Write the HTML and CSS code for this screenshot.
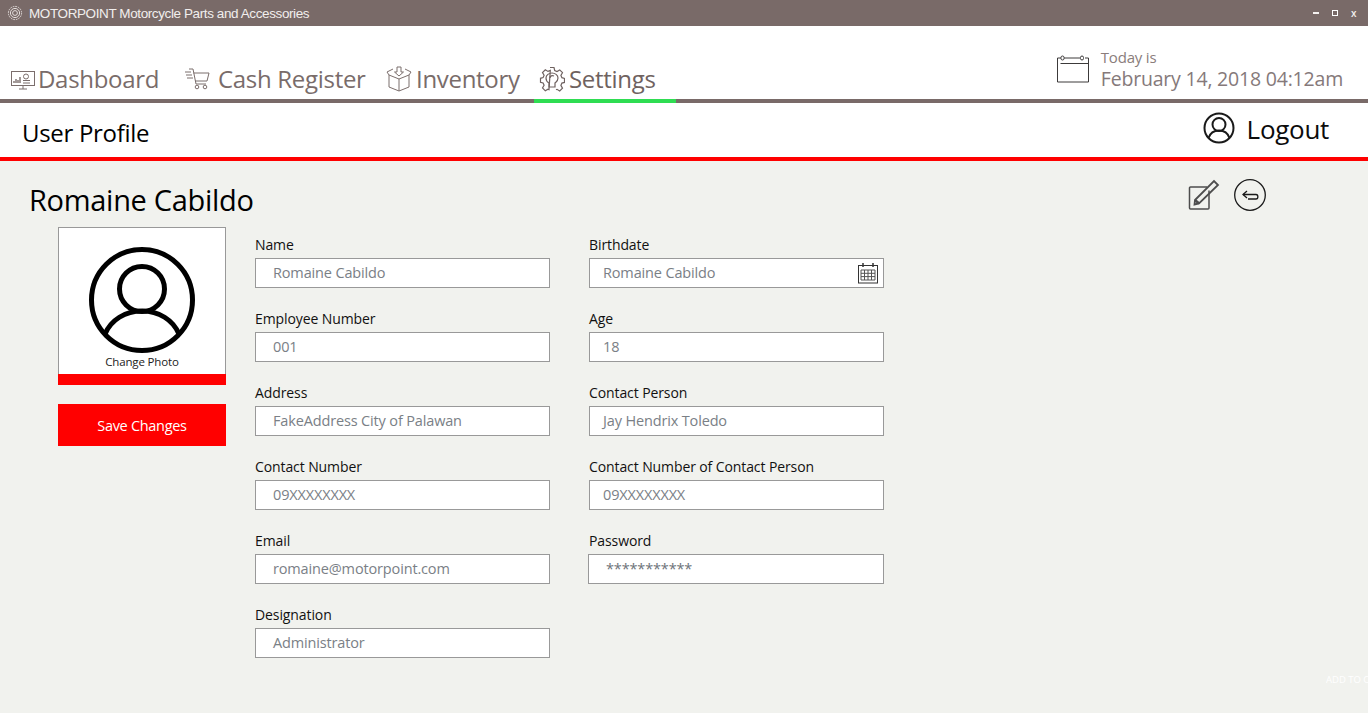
FILE: index.html
```html
<!DOCTYPE html>
<html lang="en">
<head>
<meta charset="utf-8">
<title>MOTORPOINT</title>
<link rel="stylesheet" href="styles.css">
</head>
<body>
<div class="app">
  <header class="titlebar">
    <svg class="title-logo" viewBox="0 0 16 16" width="16" height="16" fill="none" stroke="#e4dedc" stroke-width="1"><circle cx="8" cy="8" r="6.6" stroke-dasharray="1.6 1"/><circle cx="8" cy="8" r="4.6"/><circle cx="8" cy="8" r="2.4"/></svg>
    <span class="title-text">MOTORPOINT Motorcycle Parts and Accessories</span>
    <div class="win-controls">
      <span class="win-min"></span>
      <span class="win-max"></span>
      <span class="win-close">x</span>
    </div>
  </header>

  <nav class="navbar">
    <div class="tabs">
      <a class="tab tab-dash">
        <svg viewBox="0 0 26 22" width="26" height="22" fill="none" stroke="#7b6e6c" stroke-width="1"><rect x="1.5" y="3.5" width="23" height="14"/><path d="M9 21h8M13 18v3"/><path d="M4 15v-2M6 15v-4M8 15v-3M10 15V9" stroke-width="1.4"/><circle cx="16" cy="8.5" r="2.5"/><path d="M13 12.5h7M13 15h7"/></svg>
        <span>Dashboard</span>
      </a>
      <a class="tab tab-cash">
        <svg viewBox="0 0 26 24" width="26" height="24" fill="none" stroke="#7b6e6c" stroke-width="1"><path d="M5 2h4l3 15h10"/><path d="M9.5 6H25l-2 8H11"/><path d="M1 5h6M2 8h6M3 11h6"/><circle cx="13" cy="20" r="1.8"/><circle cx="21" cy="20" r="1.8"/></svg>
        <span>Cash Register</span>
      </a>
      <a class="tab tab-inv">
        <svg viewBox="0 0 26 26" width="26" height="26" fill="none" stroke="#7b6e6c" stroke-width="1"><path d="M3 9v12l10 4 10-4V9"/><path d="M3 9l10 4 10-4M13 13v12"/><path d="M3 9L1 6l6-3M23 9l2-3-6-3"/><path d="M11 1h4v5h2.5L13 10 8.500 6H11z"/></svg>
        <span>Inventory</span>
      </a>
      <a class="tab tab-set">
        <svg viewBox="0 0 26 26" width="26" height="26" fill="none" stroke="#6f6260" stroke-width="1.2"><path d="M11 1.500h4l.7 3 2.300 1 2.700-1.600 2.800 2.800-1.600 2.700 1 2.300 2.600.7v4l-2.600.7-1 2.300 1.600 2.700-2.800 2.800-2.700-1.600-1 .4M10 23.600l-1-.4-2.700 1.600-2.800-2.800 1.600-2.700-1-2.300-2.600-.7v-4l2.600-.7 1-2.300-1.600-2.700 2.800-2.800 2.700 1.600 2.300-1z"/><path d="M10 20v-3c-2-1-3-3-3-5 0-3 3-5 6-5s6 2 6 5-2 4-3 5v4h-6z"/><path d="M11 12c0-2 2-3 4-2"/></svg>
        <span>Settings</span>
      </a>
    </div>
    <div class="today">
      <svg class="today-icon" viewBox="0 0 34 28" width="34" height="28" fill="none" stroke="#3c3a3a" stroke-width="1"><path d="M5 3H1.500v24h31V3H29"/><path d="M4.500 8.500h28"/><path d="M8 3h16"/><rect x="5" y="1" width="3" height="4" rx="1.500"/><rect x="24.500" y="1" width="3" height="4" rx="1.500"/></svg>
      <div class="today-text">
        <div class="today-label">Today is</div>
        <div class="today-date">February 14, 2018 04:12am</div>
      </div>
    </div>
  </nav>

  <div class="subheader">
    <h1 class="page-title">User Profile</h1>
    <a class="logout">
      <svg viewBox="0 0 32 32" width="32" height="32" fill="none" stroke="#1a1a1a" stroke-width="2"><circle cx="16" cy="16" r="14.500"/><circle cx="16" cy="12.500" r="6.500"/><path d="M5.500 26c1.500-4.500 5.500-7.500 10.500-7.500S25 21.500 26.500 26"/></svg>
      <span>Logout</span>
    </a>
  </div>

  <main class="content">
    <div class="content-head">
      <h2 class="person">Romaine Cabildo</h2>
      <div class="actions">
        <svg viewBox="0 0 32 32" width="32" height="32" fill="none" stroke="#4d4d4d" stroke-width="1.500"><path d="M21 11.500V29a1 1 0 0 1-1 1H2.500a1 1 0 0 1-1-1V9a1 1 0 0 1 1-1H19"/><path d="M7 21l-.5 4.500 4.500-1L30 6l-4-4z" stroke-width="1.800"/><path d="M7 21l4 3.500" stroke-width="2.500"/></svg>
        <svg viewBox="0 0 32 32" width="32" height="32" fill="none" stroke="#1a1a1a" stroke-width="1.300"><circle cx="16" cy="16" r="15.300"/><path d="M13 12l-4 3.500 4 3.500"/><path d="M9 15.500h13c2.500 0 2.500 4.500 0 4.500h-8"/></svg>
      </div>
    </div>

    <div class="profile">
      <aside class="side">
        <div class="photo">
          <div class="photo-inner">
            <svg viewBox="0 0 106 106" width="106" height="106" fill="none" stroke="#000" stroke-width="5"><circle cx="53" cy="53" r="50.500"/><circle cx="53" cy="42" r="22.500"/><path d="M16 87c6-14 20-23 37-23s31 9 37 23"/></svg>
            <span class="photo-label">Change Photo</span>
          </div>
          <div class="photo-bar"></div>
        </div>
        <button class="save">Save Changes</button>
      </aside>

      <form class="form">
        <div class="field"><label>Name</label><div class="input">Romaine Cabildo</div></div>
        <div class="field"><label>Birthdate</label>
          <div class="input input-date">Romaine Cabildo
            <svg class="date-icon" viewBox="0 0 20 22" width="20" height="22" fill="none" stroke="#333" stroke-width="1"><rect x="0.500" y="3.500" width="19" height="17.500"/><path d="M5 1v4M15 1v4" stroke-width="1.500"/><path d="M3 8h14v10H3zM3 11.300h14M3 14.600h14M6.500 8v10M10 8v10M13.500 8v10" stroke="#555"/></svg>
          </div>
        </div>
        <div class="field"><label>Employee Number</label><div class="input">001</div></div>
        <div class="field"><label>Age</label><div class="input input-short">18</div></div>
        <div class="field"><label>Address</label><div class="input">FakeAddress City of Palawan</div></div>
        <div class="field"><label>Contact Person</label><div class="input input-short">Jay Hendrix Toledo</div></div>
        <div class="field"><label>Contact Number</label><div class="input">09XXXXXXXX</div></div>
        <div class="field"><label>Contact Number of Contact Person</label><div class="input input-short">09XXXXXXXX</div></div>
        <div class="field"><label>Email</label><div class="input">romaine@motorpoint.com</div></div>
        <div class="field"><label>Password</label><div class="input input-pass">***********</div></div>
        <div class="field"><label>Designation</label><div class="input">Administrator</div></div>
      </form>
    </div>
    <span class="ghost">ADD TO CART</span>
  </main>
  <div class="footer-gap"></div>
</div>
</body>
</html>
```
FILE: styles.css
```css
* { box-sizing: border-box; }
html, body { margin: 0; padding: 0; height: 100%; background: #fff; overflow: hidden; }
body { font-family: "Open Sans", "Noto Sans", sans-serif; color: #000; }
.app { display: flex; flex-direction: column; width: 1368px; height: 720px; }

.titlebar { height: 26px; background: #796a68; display: flex; align-items: center; padding: 0 0 0 7px; color: #f1eeed; flex: none; }
.title-logo { margin-right: 6px; }
.title-text { font-family: "Liberation Sans", sans-serif; font-size: 13.500px; letter-spacing: -0.400px; }
.win-controls { margin-left: auto; display: flex; align-items: center; gap: 13px; padding-right: 11px; }
.win-min { width: 6px; height: 2px; background: #f4f1f0; }
.win-max { width: 6px; height: 6px; border: 1.500px solid #fff; }
.win-close { font-size: 10px; font-weight: 600; line-height: 10px; width: 6px; }

.navbar { height: 77px; flex: none; border-bottom: 4px solid #796a68; display: flex; justify-content: space-between; position: relative; }
.tabs { display: flex; align-items: flex-end; padding-left: 10px; }
.tab { display: flex; align-items: center; color: #796c6a; font-size: 24px; letter-spacing: -0.300px; height: 73px; padding-top: 29px; margin-bottom: -4px; border-bottom: 4px solid transparent; line-height: 40px; }
.tab svg { flex: none; }
.tab-dash { gap: 2px; width: 174px; }
.tab-cash { gap: 8px; width: 204px; }
.tab-inv { gap: 4px; width: 143px; margin-left: -3px; padding-left: 1px; }
.tab-set { gap: 4px; width: 142px; padding-left: 5px; margin-left: 6px; border-bottom-color: #2fdd52; color: #6f6260; }

.today { display: flex; align-items: flex-start; padding: 20px 25px 0 0; }
.today-icon { margin: 9px 11px 0 0; }
.today-label { font-size: 15px; line-height: 22px; color: #8a7d7b; letter-spacing: -0.200px; }
.today-date { font-size: 19.500px; line-height: 22px; color: #85797a; letter-spacing: -0.200px; }

.subheader { height: 58px; flex: none; border-bottom: 4px solid #f00; display: flex; justify-content: space-between; padding: 0 39px 0 22px; }
.page-title { margin: 13px 0 0; font-size: 24px; font-weight: 400; line-height: 34px; letter-spacing: -0.300px; }
.logout { display: flex; align-items: flex-start; gap: 12px; font-size: 26px; line-height: 34px; padding-top: 9px; letter-spacing: -0.300px; color: #0c0c0c; }

.content { flex: 1; background: #f1f2ee; position: relative; padding: 0 0 0 29px; }
.content-head { display: flex; justify-content: space-between; height: 66px; padding: 18px 102px 0 0; }
.person { margin: 0; font-size: 29px; font-weight: 400; line-height: 42px; letter-spacing: -0.300px; }
.actions { display: flex; gap: 14px; }

.profile { display: flex; }
.side { margin-left: 29px; width: 168px; margin-right: 29px; flex: none; }
.photo { height: 158px; }
.photo-inner { height: 147px; background: #fff; border: 1px solid #999; border-bottom: 0; display: flex; flex-direction: column; align-items: center; padding-top: 19px; }
.photo-label { font-size: 11.500px; line-height: 16px; margin-top: 1px; color: #222; letter-spacing: -0.150px; }
.photo-bar { height: 11px; background: #f00; }
.save { display: block; width: 168px; height: 42px; margin-top: 19px; border: 0; background: #f00; color: #fff; font-family: inherit; font-size: 14.500px; letter-spacing: -0.300px; padding: 0; }

.form { display: grid; grid-template-columns: 295px 295px; column-gap: 39px; grid-auto-rows: 74px; }
.field label { display: block; font-size: 14px; line-height: 20px; margin-top: 8px; margin-bottom: 3px; color: #111; letter-spacing: -0.100px; height: 20px; }
.input { height: 30px; border: 1px solid #999; background: #fff; color: #7a8086; font-size: 14.500px; line-height: 28px; padding-left: 17px; letter-spacing: -0.150px; position: relative; }
.input-short { padding-left: 13px; }
.input-date { padding-left: 13px; }
.input-pass { margin-left: -1px; color: #6d7379; }
.date-icon { position: absolute; right: 5px; top: 3px; }

.ghost { position: absolute; right: -26px; top: 513px; font-size: 9.500px; line-height: 12px; color: #fff; width: 68px; white-space: nowrap; overflow: hidden; }
.footer-gap { height: 7px; flex: none; }
```
